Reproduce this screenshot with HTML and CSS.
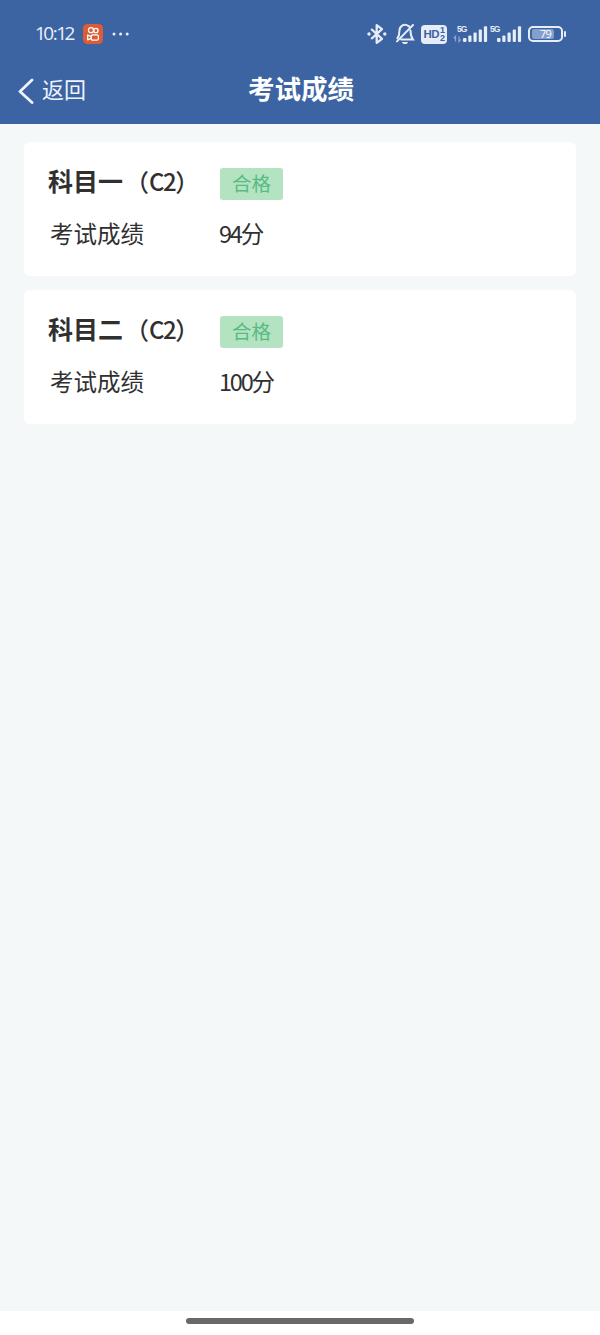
FILE: index.html
```html
<!DOCTYPE html>
<html lang="zh-CN">
<head>
  <meta charset="UTF-8" />
  <meta name="viewport" content="width=device-width, initial-scale=1.0" />
  <title>考试成绩</title>
  <link rel="stylesheet" href="styles.css">
</head>
<body>
  <header class="header">
    <div class="status-bar">
      <div class="status-left">
        <span class="time">10<span class="colon">:</span>12</span>
        <svg class="app-icon" width="20" height="20" viewBox="0 0 20 20" fill="none" stroke="#fff" stroke-width="1.3">
          <rect width="20" height="20" rx="4.5" fill="#dc5c36" stroke="none" />
          <circle cx="8" cy="6.2" r="2.5" />
          <circle cx="12.9" cy="6.5" r="2.2" />
          <rect x="8.2" y="10.8" width="7.2" height="5.4" rx="1.5" />
          <path d="M8.2 12.6 4.7 11v4.8L8.2 14.3" stroke-linejoin="round" />
        </svg>
        <svg class="dots" width="18" height="4" viewBox="0 0 18 4" fill="#eaf0fa">
          <circle cx="2" cy="2" r="1.5" />
          <circle cx="8.6" cy="2" r="1.5" />
          <circle cx="15.2" cy="2" r="1.5" />
        </svg>
      </div>
      <div class="status-right">
        <svg class="bluetooth" width="20" height="22" viewBox="0 0 20 22" fill="none" stroke="#e6edf8" stroke-width="2.3">
          <path d="M4.2 6 15 15.8l-5.3 4V2.2l5.3 4L4.2 16" stroke-linejoin="round" />
          <circle cx="2" cy="11" r="1.7" fill="#e6edf8" stroke="none" />
          <circle cx="17.8" cy="11" r="1.7" fill="#e6edf8" stroke="none" />
        </svg>
        <svg class="bell" width="20" height="22" viewBox="0 0 20 22" fill="none" stroke="#e6edf8" stroke-width="2" stroke-linecap="round">
          <path d="M14 3.4C8.5-.4 4.4 3.6 4.4 8.1c0 4-.6 5.5-2 7.1M15.5 7.5c0 4.5.5 6.4 2.5 9.1H6.2M18 2 2 18.4" />
          <path d="M7 19h6c-.5 2.8-5.5 2.8-6 0z" fill="#e6edf8" stroke="none" />
        </svg>
        <div class="hd">
          <span>HD</span>
          <span class="hd-sims"><i>1</i><i>2</i></span>
        </div>
        <div class="signal signal-first">
          <span class="network">5G</span>
          <svg width="35" height="18" viewBox="0 0 35 18" fill="#e6edf8">
            <path d="M2.5 16.5v-5L.8 13.5M6 11.5v5l1.7-2" fill="none" stroke="#8da7d1" stroke-width="1.2" />
            <rect x="10" y="13" width="3.5" height="4" rx="1" />
            <rect x="15.3" y="10.5" width="3.2" height="6.5" rx="1" />
            <rect x="20.5" y="7.5" width="3.2" height="9.5" rx="1" />
            <rect x="25.7" y="4.5" width="3.2" height="12.5" rx="1" />
            <rect x="30.9" y="1.2" width="3.2" height="15.8" rx="1" />
          </svg>
        </div>
        <div class="signal">
          <span class="network">5G</span>
          <svg width="26" height="18" viewBox="0 0 26 18" fill="#e6edf8">
            <rect x="1" y="13" width="3.5" height="4" rx="1" />
            <rect x="6.3" y="10.5" width="3.2" height="6.5" rx="1" />
            <rect x="11.5" y="7.5" width="3.2" height="9.5" rx="1" />
            <rect x="16.7" y="4.5" width="3.2" height="12.5" rx="1" />
            <rect x="21.9" y="1.2" width="3.2" height="15.8" rx="1" />
          </svg>
        </div>
        <div class="battery"><span>79</span></div>
      </div>
    </div>
    <nav class="nav-bar">
      <a class="back" href="#">
        <svg width="16" height="26" viewBox="0 0 16 26" fill="none" stroke="#eef3fb" stroke-width="2.8" stroke-linecap="round" stroke-linejoin="round">
          <path d="M14 2 2 13.5 14 24.5" />
        </svg>
        <span>返回</span>
      </a>
      <h1 class="title">考试成绩</h1>
    </nav>
  </header>

  <main class="results">
    <section class="card">
      <div class="row">
        <h2 class="subject">科目一<span class="level">（<span class="code">C2</span>）</span></h2>
        <span class="tag">合格</span>
      </div>
      <div class="row">
        <span class="label">考试成绩</span>
        <span class="score"><span class="num">94</span>分</span>
      </div>
    </section>
    <section class="card">
      <div class="row">
        <h2 class="subject">科目二<span class="level">（<span class="code">C2</span>）</span></h2>
        <span class="tag">合格</span>
      </div>
      <div class="row">
        <span class="label">考试成绩</span>
        <span class="score"><span class="num">100</span>分</span>
      </div>
    </section>
  </main>

  <footer class="gesture-bar"><div class="handle"></div></footer>
</body>
</html>
```
FILE: styles.css
```css
* {
  box-sizing: border-box;
}
body {
  margin: 0;
  height: 1335px;
  display: flex;
  flex-direction: column;
  background: #f4f8f9;
  color: #303030;
  font-family: "Noto Sans CJK SC", sans-serif;
  overflow: hidden;
}
h1, h2 {
  margin: 0;
}
.header {
  height: 124px;
  background: #3c64a2;
  color: #fff;
}

/* status bar */
.status-bar {
  height: 56px;
  padding: 12px 34px 0 35px;
  display: flex;
  justify-content: space-between;
  align-items: center;
}
.status-left, .status-right {
  display: flex;
  align-items: center;
}
.time {
  width: 48px;
  margin-top: -2px;
  font-family: "Open Sans", sans-serif;
  font-size: 19px;
  line-height: 20px;
  letter-spacing: -2.5px;
  color: #eaf0fa;
}
.colon {
  margin: 0 1px;
}
.dots {
  margin-left: 9px;
}
.bluetooth {
  margin-right: 1px;
}
.bell {
  margin-left: 7px;
}
.hd {
  width: 26px;
  height: 19px;
  margin-left: 6px;
  display: flex;
  align-items: center;
  justify-content: center;
  gap: 1px;
  border-radius: 4px;
  background: #e6edf8;
  color: #3c64a2;
  font: bold 11.5px/19px "Liberation Sans", sans-serif;
  letter-spacing: -0.5px;
}
.hd-sims {
  display: flex;
  flex-direction: column;
  font-size: 9px;
  line-height: 8px;
}
.hd-sims i {
  font-style: normal;
}
.signal {
  position: relative;
  height: 18px;
  margin-left: 8px;
}
.signal svg {
  display: block;
}
.signal-first {
  margin-left: 6px;
}
.network {
  position: absolute;
  left: -6px;
  top: 0;
  color: #e6edf8;
  font: bold 8.5px/8px "Liberation Sans", sans-serif;
  letter-spacing: -1px;
}
.signal-first .network {
  left: 4px;
}
.battery {
  position: relative;
  width: 35px;
  height: 16px;
  margin: 0 3px 0 6px;
  padding: 2px;
  border: 2px solid #e6edf8;
  border-radius: 5px;
}
.battery::after {
  content: "";
  position: absolute;
  right: -5px;
  top: 3px;
  width: 2px;
  height: 6px;
  border-radius: 1px;
  background: #e6edf8;
}
.battery span {
  display: block;
  width: 22px;
  height: 10px;
  margin-top: -1px;
  padding-left: 8px;
  border-radius: 2px;
  background: #839fcd;
  font: 11px/10px "Open Sans", sans-serif;
  letter-spacing: -0.7px;
}

/* navigation */
.nav-bar {
  height: 68px;
  padding: 0 16px 0 18px;
  display: grid;
  grid-template-columns: 1fr auto 1fr;
  align-items: center;
}
.back {
  display: flex;
  align-items: center;
  gap: 8px;
  color: #eef3fb;
  font-size: 22px;
  line-height: 30px;
  text-decoration: none;
}
.back svg {
  margin-top: 1px;
}
.back span {
  margin-top: -4px;
}
.title {
  margin-top: -4px;
  font-size: 26.5px;
  line-height: 34px;
  font-weight: 700;
}

/* result cards */
.results {
  flex: 1;
  padding: 18px 24px;
}
.card {
  height: 133.5px;
  margin-bottom: 14.5px;
  padding: 24.5px 24px;
  border-radius: 6px;
  background: #fff;
}
.row {
  display: grid;
  grid-template-columns: 172px 1fr;
  align-items: center;
  height: 34px;
}
.row + .row {
  margin-top: 16px;
}
.subject {
  margin-top: -7px;
  font-size: 25px;
  line-height: 32px;
  font-weight: 700;
  white-space: nowrap;
}
.level {
  margin-left: 2px;
  font-size: 24px;
  font-weight: 500;
}
.code {
  letter-spacing: -1.5px;
}
.tag {
  justify-self: start;
  width: 63px;
  height: 32px;
  border-radius: 3px;
  background: #b3e3c1;
  color: #58bb82;
  font-size: 19.5px;
  line-height: 30px;
  text-align: center;
}
.label, .score {
  margin-top: -1px;
  font-size: 23.5px;
  line-height: 32px;
}
.label {
  padding-left: 2px;
}
.score {
  margin-left: -1px;
}
.num {
  letter-spacing: -2.2px;
}

/* system gesture area */
.gesture-bar {
  height: 24px;
  padding-top: 7px;
  background: #fff;
}
.handle {
  width: 228px;
  height: 6px;
  margin: 0 auto;
  border-radius: 3px;
  background: #696969;
}
```
